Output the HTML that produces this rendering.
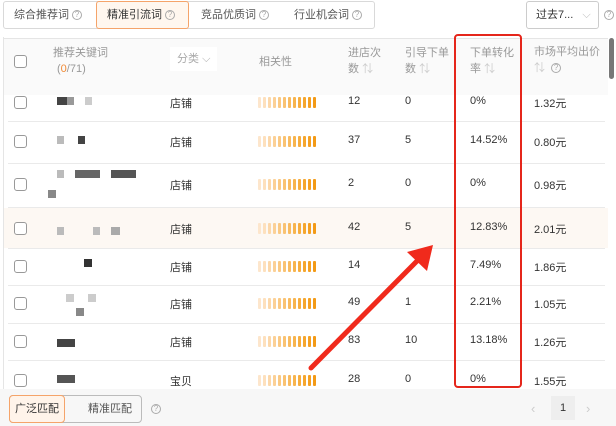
<!DOCTYPE html>
<html><head><meta charset="utf-8"><style>
*{margin:0;padding:0;box-sizing:border-box}
body{width:616px;height:426px;overflow:hidden;background:#fff;font-family:"Liberation Sans","Noto Sans CJK SC",sans-serif;font-size:11px;color:#333;position:relative}
.a{position:absolute;white-space:nowrap}
.tabs{left:3px;top:1px;height:28px;width:372px;border:1px solid #d9d9d9;border-radius:3px}
.tab{top:1px;height:28px;line-height:28px;font-size:11px;color:#555}
.q{display:inline-block;width:10px;height:10px;border:1px solid #aaa;border-radius:50%;font-size:8px;line-height:8px;text-align:center;color:#aaa;vertical-align:middle;margin-left:3px}
.h{color:#999;font-size:11px;line-height:16px}
.s{color:#ccc}
.cb{width:13px;height:13px;border:1px solid #999;border-radius:3px;background:#fff}
.line{left:8px;width:597px;height:1px;background:#eaeaea}
.bars{display:flex;gap:2px}
.bars i{display:block;width:3px;height:11px;border-radius:1px}
.px{position:absolute}
</style></head><body>
<div class="a tabs"></div>
<div class="a tab" style="left:14px">综合推荐词<span class="q">?</span></div>
<div class="a" style="left:96px;top:1px;width:93px;height:28px;border:1px solid #f5a46a;border-radius:3px;background:#fff7ef"></div>
<div class="a tab" style="left:107px;color:#333">精准引流词<span class="q">?</span></div>
<div class="a tab" style="left:201px">竞品优质词<span class="q">?</span></div>
<div class="a tab" style="left:294px">行业机会词<span class="q">?</span></div>
<div class="a" style="left:526px;top:1px;width:73px;height:28px;border:1px solid #ccc;border-radius:3px;line-height:26px;padding-left:9px;color:#333">过去7... <span style="color:#bbb;margin-left:6px">⌵</span></div>
<div class="a q" style="left:604px;top:10px;margin:0">?</div>

<div class="a" style="left:3px;top:37px;width:613px;height:352px;border-left:1px solid #e5e5e5"></div>
<div class="a" style="left:4px;top:38px;width:604px;height:57px;background:#fafafa"></div>
<div class="a" style="left:4px;top:38px;width:604px;height:1px;background:#e5e5e5"></div>
<div class="a" style="left:609px;top:38px;width:5px;height:41px;background:#777;border-radius:3px"></div>
<div class="a cb" style="left:14px;top:55px"></div>
<div class="a h" style="left:53px;top:45px">推荐关键词</div>
<div class="a h" style="left:57px;top:61px">(<span style="color:#f08a36">0</span>/71)</div>
<div class="a h" style="left:170px;top:47px;background:#fff;padding:4px 7px;color:#aaa">分类 <span>⌵</span></div>
<div class="a h" style="left:259px;top:54px">相关性</div>
<div class="a h" style="left:348px;top:45px">进店次<br>数 <span class="s">⇅</span></div>
<div class="a h" style="left:405px;top:45px">引导下单<br>数 <span class="s">⇅</span></div>
<div class="a h" style="left:470px;top:45px">下单转化<br>率 <span class="s">⇅</span></div>
<div class="a h" style="left:534px;top:44px">市场平均出价<br><span class="s">⇅</span> <span class="q">?</span></div>
<div class="a" style="left:4px;top:208px;width:604px;height:40px;background:#fdf8f3"></div>

<div id="rows"></div>
<script>
const ys=[102,141,184,228,266,303,341,380];
const d=[["店铺","12","0","0%","1.32元"],["店铺","37","5","14.52%","0.80元"],["店铺","2","0","0%","0.98元"],["店铺","42","5","12.83%","2.01元"],["店铺","14","","7.49%","1.86元"],["店铺","49","1","2.21%","1.05元"],["店铺","83","10","13.18%","1.26元"],["宝贝","28","0","0%","1.55元"]];
const lines=[121,163,207,248,285,323,360];
const cols=["#fde6cc","#fde0bd","#fcd8aa","#fbd096","#fac983","#f9c272","#f8bb60","#f7b44e","#f6ad3e","#f5a62e","#f4a022","#f39a16"];
let h="";
lines.forEach(y=>h+=`<div class="a line" style="top:${y}px"></div>`);
ys.forEach((y,i)=>{const r=d[i];
h+=`<div class="a cb" style="left:14px;top:${y-6}px"></div>`;
h+=`<div class="a" style="left:170px;top:${y-7}px">${r[0]}</div>`;
h+=`<div class="a bars" style="left:258px;top:${y-5}px">${cols.map(c=>`<i style="background:${c}"></i>`).join("")}</div>`;
h+=`<div class="a" style="left:348px;top:${y-7}px">${r[1]}</div>`;
h+=`<div class="a" style="left:405px;top:${y-7}px">${r[2]}</div>`;
h+=`<div class="a" style="left:470px;top:${y-7}px">${r[3]}</div>`;
h+=`<div class="a" style="left:534px;top:${y-7}px">${r[4]}</div>`;});
const px=[[57,97,10,"#444"],[67,97,7,"#999"],[85,97,7,"#ccc"],[57,136,7,"#bbb"],[78,136,7,"#444"],[57,170,7,"#bbb"],[75,170,25,"#666"],[111,170,25,"#555"],[48,190,8,"#888"],[57,227,7,"#bbb"],[93,227,7,"#bbb"],[111,227,9,"#aaa"],[84,259,8,"#333"],[66,294,8,"#ccc"],[88,294,8,"#ccc"],[76,308,8,"#888"],[57,339,18,"#444"],[57,375,18,"#555"]];
px.forEach(p=>h+=`<div class="px" style="left:${p[0]}px;top:${p[1]}px;width:${p[2]}px;height:8px;background:${p[3]}"></div>`);
document.getElementById("rows").innerHTML=h;
</script>

<div class="a" style="left:0;top:389px;width:616px;height:37px;background:#f7f7f7"></div>
<div class="a" style="left:9px;top:395px;width:133px;height:28px;border:1px solid #bbb;border-radius:4px;background:#f7f7f7"></div>
<div class="a" style="left:9px;top:395px;width:56px;height:28px;border:1px solid #f5a46a;border-radius:4px;background:#fff4ea;line-height:26px;text-align:center;font-size:11px">广泛匹配</div>
<div class="a" style="left:88px;top:395px;line-height:28px;color:#555">精准匹配</div>
<div class="a q" style="left:151px;top:404px;margin:0">?</div>
<div class="a" style="left:531px;top:401px;color:#ccc;font-size:13px">‹</div>
<div class="a" style="left:551px;top:396px;width:24px;height:24px;background:#eee;text-align:center;line-height:24px">1</div>
<div class="a" style="left:586px;top:401px;color:#ccc;font-size:13px">›</div>

<div class="a" style="left:454px;top:34px;width:68px;height:354px;border:2px solid #e5261b;border-radius:4px"></div>
<svg class="a" style="left:0;top:0" width="616" height="426">
<line x1="311" y1="368" x2="420" y2="258" stroke="#f02a1c" stroke-width="5" stroke-linecap="round"/>
<polygon points="433,245 407,252 427,271" fill="#f02a1c"/>
</svg>
</body></html>
